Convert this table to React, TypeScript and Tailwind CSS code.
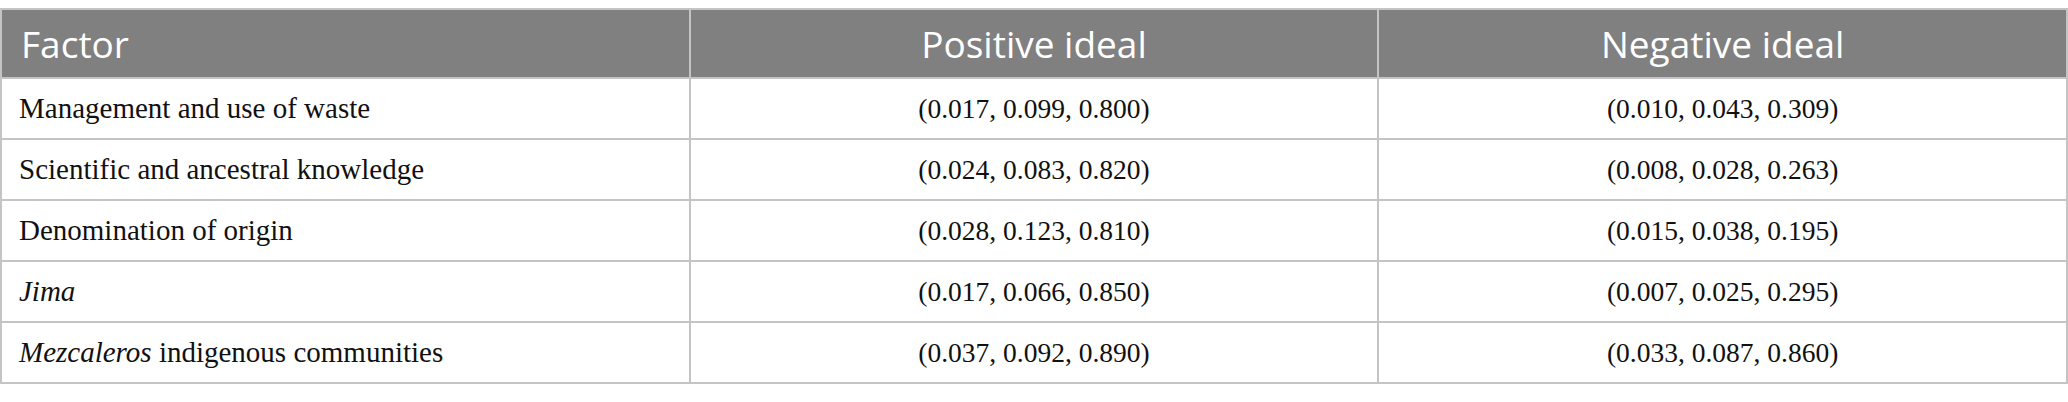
import React from "react";

const rows: { f: React.ReactNode; p: string; n: string }[] = [
  { f: "Management and use of waste", p: "(0.017, 0.099, 0.800)", n: "(0.010, 0.043, 0.309)" },
  { f: "Scientific and ancestral knowledge", p: "(0.024, 0.083, 0.820)", n: "(0.008, 0.028, 0.263)" },
  { f: "Denomination of origin", p: "(0.028, 0.123, 0.810)", n: "(0.015, 0.038, 0.195)" },
  { f: <i>Jima</i>, p: "(0.017, 0.066, 0.850)", n: "(0.007, 0.025, 0.295)" },
  {
    f: (
      <>
        <i>Mezcaleros</i> indigenous communities
      </>
    ),
    p: "(0.037, 0.092, 0.890)",
    n: "(0.033, 0.087, 0.860)",
  },
];

export default function App() {
  return (
    <div className="w-[2068px] h-[402px] bg-white pt-2">
      <table className="w-full table-fixed border-collapse">
        <thead>
          <tr className="h-[69px] bg-[#808080] text-white text-[37px] font-['Open_Sans',sans-serif]">
            <th className="border-2 border-[#c4c4c4] text-left font-normal pl-[19px]">Factor</th>
            <th className="border-2 border-[#c4c4c4] text-center font-normal">Positive ideal</th>
            <th className="border-2 border-[#c4c4c4] text-center font-normal">Negative ideal</th>
          </tr>
        </thead>
        <tbody className="text-[27.5px] text-[#111] font-['Liberation_Serif',serif]">
          {rows.map((r, i) => (
            <tr key={i} className="h-[61px]">
              <td className="border-2 border-[#c4c4c4] pl-[17px] text-[29px]">{r.f}</td>
              <td className="border-2 border-[#c4c4c4] text-center">{r.p}</td>
              <td className="border-2 border-[#c4c4c4] text-center">{r.n}</td>
            </tr>
          ))}
        </tbody>
      </table>
    </div>
  );
}
